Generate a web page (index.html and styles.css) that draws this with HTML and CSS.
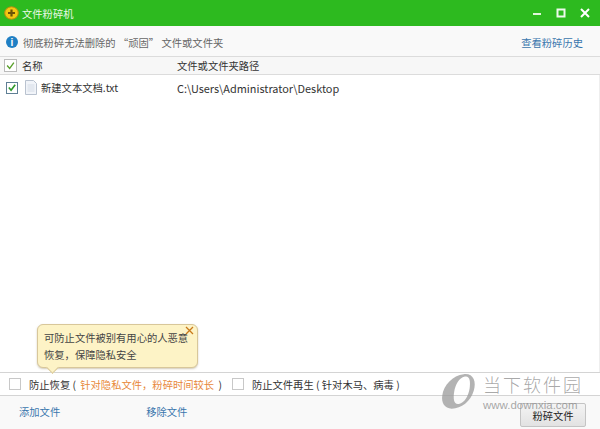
FILE: index.html
```html
<!DOCTYPE html>
<html lang="zh-CN">

<head>
    <meta charset="UTF-8">
    <link rel="stylesheet" href="styles.css">
    <title>文件粉碎机</title>
</head>

<body>
    <section class="window">
        <div class="titlebar">
            <svg class="logo" width="15" height="14" viewBox="0 0 15 14">
                <ellipse cx="7.500" cy="7" rx="6.800" ry="6.200" fill="#f3c712" stroke="#b98a10" stroke-width="1"/>
                <path d="M7.500 3.500v7M4 7h7" stroke="#6b5208" stroke-width="2.200"/>
            </svg>
            <span class="title">文件粉碎机</span>
            <div class="controls">
                <svg width="12" height="12" viewBox="0 0 12 12"><path d="M2 7h8" stroke="#dff5da" stroke-width="2"/></svg>
                <svg width="12" height="12" viewBox="0 0 12 12"><rect x="2.500" y="2.500" width="7" height="7" fill="none" stroke="#eef9ec" stroke-width="2"/></svg>
                <svg width="12" height="12" viewBox="0 0 12 12"><path d="M2 2l8 8M10 2l-8 8" stroke="#fff" stroke-width="2"/></svg>
            </div>
        </div>

        <div class="infobar">
            <span class="info-icon">i</span>
            <span class="info-text">彻底粉碎无法删除的 “顽固” 文件或文件夹</span>
            <a class="link history">查看粉碎历史</a>
        </div>

        <div class="table-head">
            <div class="col-name">
                <span class="check check-big"><svg width="13" height="13" viewBox="0 0 13 13"><path d="M2.500 6.500l3 3.500 5-7" fill="none" stroke="#5aa02c" stroke-width="1.600"/></svg></span>
                <span>名称</span>
            </div>
            <div class="col-path">文件或文件夹路径</div>
        </div>

        <div class="file-list">
            <div class="file-row">
                <div class="col-name">
                    <span class="check check-on"><svg width="11" height="11" viewBox="0 0 11 11"><path d="M2 5.500l2.500 3 4.500-6" fill="none" stroke="#2f9a2a" stroke-width="1.800"/></svg></span>
                    <svg class="file-icon" width="12" height="15" viewBox="0 0 12 15">
                        <path d="M.5.500h8l3 3v11H.5z" fill="#f1f4f9" stroke="#b9c2cf"/>
                        <path d="M2.500 5h7M2.500 7h7M2.500 9h7M2.500 11h7" stroke="#d5dce6"/>
                    </svg>
                    <span>新建文本文档.txt</span>
                </div>
                <div class="col-path latin">C:\Users\Administrator\Desktop</div>
            </div>
        </div>

        <div class="options">
            <span class="check check-off"></span>
            <span class="opt-text">防止恢复 ( <em>针对隐私文件，粉碎时间较长</em> )</span>
            <span class="check check-off"></span>
            <span class="opt-text">防止文件再生 ( 针对木马、病毒 )</span>
        </div>

        <div class="footer">
            <a class="link add">添加文件</a>
            <a class="link">移除文件</a>
            <div class="shred-btn">粉碎文件</div>
        </div>

        <div class="tip">
            <span class="tip-close">
                <svg width="9" height="9" viewBox="0 0 9 9"><path d="M1 1l7 7M8 1l-7 7" stroke="#c8791a" stroke-width="1.300"/></svg>
            </span>
            可防止文件被别有用心的人恶意<br>恢复，保障隐私安全
        </div>

        <div class="watermark">
            <svg width="37" height="38" viewBox="0 0 62 64">
                <path fill-rule="evenodd" fill="#9a9a9a" fill-opacity=".75" d="M38 2C54 0 60 14 55 30 50 48 34 60 18 60 6 60 0 50 2 38 4 20 20 4 38 2ZM40 6C30 8 24 20 22 32 20 44 22 54 30 52 40 50 46 38 48 26 50 14 48 4 40 6Z"/>
            </svg>
            <div class="wm-text">
                <div class="wm-name">当下软件园</div>
                <div class="wm-url">www.downxia.com</div>
            </div>
        </div>
    </section>
</body>

</html>
```

FILE: styles.css
```css
* {
    box-sizing: border-box;
}

body {
    margin: 0;
    font-family: "Noto Sans CJK SC", "Liberation Sans", sans-serif;
    font-size: 10.300px;
    color: #333;
}

.window {
    position: relative;
    width: 600px;
    height: 429px;
    display: flex;
    flex-direction: column;
    overflow: hidden;
    background-color: #fff;
}

.titlebar {
    height: 26px;
    flex-shrink: 0;
    display: flex;
    align-items: center;
    padding-left: 4px;
    background-color: #2dba1f;
    color: #eaf8e6;
}

.logo {
    margin-right: 3px;
}

.controls {
    margin-left: auto;
    margin-right: 9px;
    display: flex;
    gap: 12px;
}

.infobar {
    height: 30px;
    flex-shrink: 0;
    display: flex;
    align-items: center;
    padding: 2px 17px 0 6px;
    background-color: #f9f9f9;
    color: #666;
}

.info-icon {
    width: 12px;
    height: 12px;
    margin-right: 5px;
    border-radius: 50%;
    display: flex;
    justify-content: center;
    align-items: center;
    background-color: #1f7fc4;
    color: #fff;
    font-family: "Liberation Sans", sans-serif;
    font-size: 10px;
    font-weight: bold;
}

.link {
    color: #3a76ad;
}

.history {
    margin-left: auto;
}

.table-head {
    height: 19px;
    flex-shrink: 0;
    display: flex;
    align-items: center;
    border-top: 1px solid #dcdcdc;
    border-bottom: 1px solid #dcdcdc;
    background-color: #f7f7f7;
}

.col-name {
    width: 177px;
    flex-shrink: 0;
    display: flex;
    align-items: center;
}

.table-head .col-name {
    padding-left: 4px;
}

.file-list {
    flex: 1;
    border-right: 1px solid #eee;
}

.file-row {
    height: 25px;
    display: flex;
    align-items: center;
    color: #333;
}

.file-row .col-name {
    padding-left: 6px;
}

.latin {
    font-size: 10.900px;
}

.check {
    display: flex;
    justify-content: center;
    align-items: center;
    flex-shrink: 0;
    background-color: #fff;
}

.check-big {
    width: 13px;
    height: 13px;
    margin-right: 5px;
    border: 1px solid #bbb;
}

.check-on {
    width: 12px;
    height: 12px;
    margin-right: 7px;
    border: 1px solid #5f7f95;
}

.check-off {
    width: 12px;
    height: 12px;
    border: 1px solid #c8c8c8;
}

.file-icon {
    margin-right: 4px;
}

.options {
    height: 24px;
    flex-shrink: 0;
    display: flex;
    align-items: center;
    padding-left: 9px;
    border-top: 1px solid #d4d4d4;
    border-bottom: 1px solid #d4d4d4;
}

.opt-text {
    margin-left: 8px;
    margin-right: 10px;
    white-space: nowrap;
}

.opt-text em {
    font-style: normal;
    margin: 0 2px;
    color: #e8883a;
}

.footer {
    height: 33px;
    flex-shrink: 0;
    display: flex;
    align-items: center;
    padding-left: 19px;
    padding-bottom: 2px;
    background-color: #f9f9f9;
}

.add {
    margin-right: 86px;
}

.shred-btn {
    width: 66px;
    height: 24px;
    margin-left: auto;
    margin-right: 14px;
    margin-top: 7px;
    display: flex;
    justify-content: center;
    align-items: center;
    border: 1px solid #c4c4c4;
    border-radius: 2px;
    background: linear-gradient(#f4f4f4, #e2e2e2);
    color: #222;
}

.tip {
    position: absolute;
    left: 37px;
    top: 324px;
    width: 161px;
    height: 44px;
    padding: 4px 0 0 6px;
    border: 1px solid #d8c79a;
    border-radius: 6px;
    background-color: #fdf3c6;
    box-shadow: 0 1px 2px rgba(120, 100, 50, 0.35);
    line-height: 17px;
    white-space: nowrap;
    color: #444;
}

.tip::after {
    content: "";
    position: absolute;
    left: 10px;
    bottom: -5px;
    width: 8px;
    height: 8px;
    background-color: #fdf3c6;
    border-right: 1px solid #d8c79a;
    border-bottom: 1px solid #d8c79a;
    transform: rotate(45deg);
}

.tip-close {
    position: absolute;
    right: 3px;
    top: 1px;
    line-height: 9px;
}

.watermark {
    position: absolute;
    left: 441px;
    top: 373px;
    display: flex;
    pointer-events: none;
}

.wm-text {
    margin-left: 5px;
    color: rgba(130, 130, 130, 0.7);
}

.wm-name {
    font-size: 18px;
    line-height: 22px;
    letter-spacing: 2px;
    font-weight: 300;
    white-space: nowrap;
}

.wm-url {
    font-family: "Liberation Sans", sans-serif;
    font-size: 11.500px;
    line-height: 14px;
    margin-top: 3px;
    white-space: nowrap;
}
```
